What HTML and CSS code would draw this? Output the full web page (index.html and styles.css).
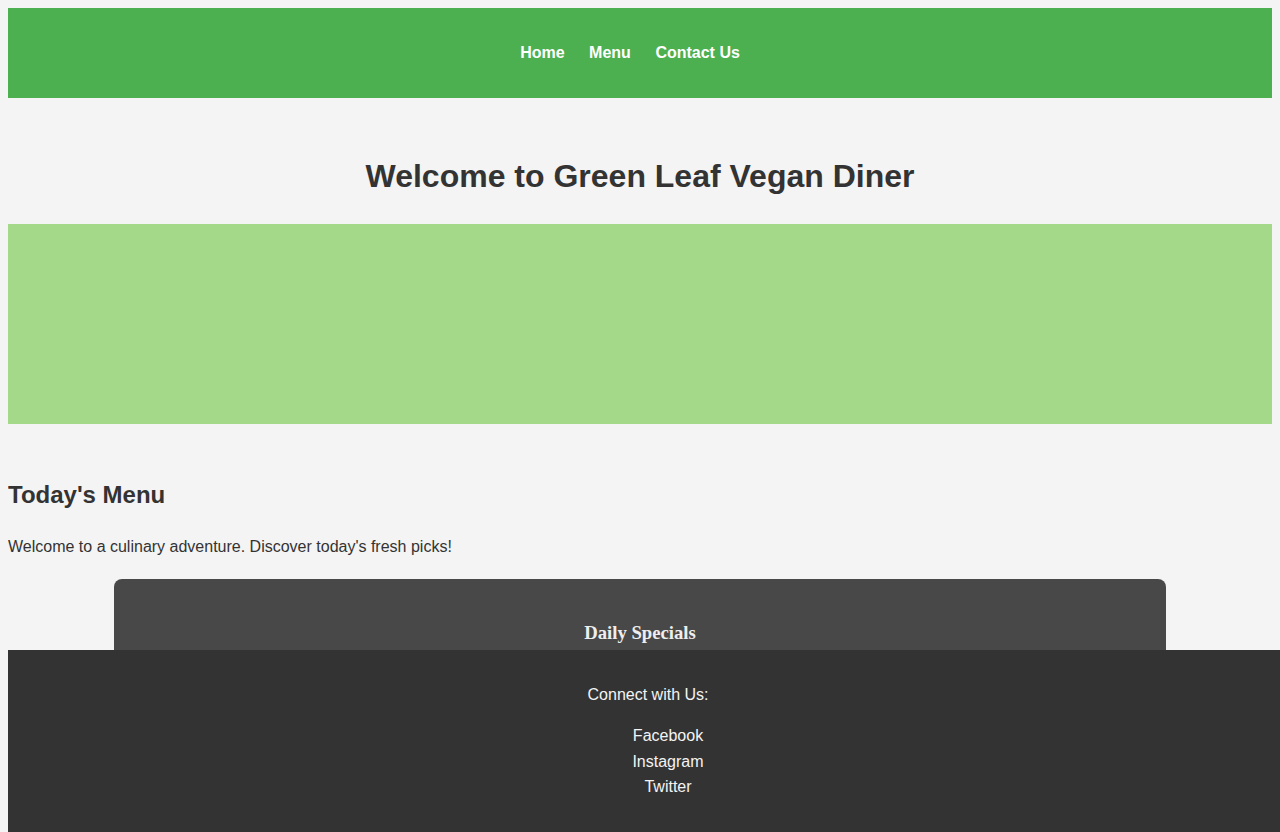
FILE: index.html
```html
<!DOCTYPE html>
<html lang="en">
<head>
<meta charset="utf-8">
<title>Green Leaf Vegan Diner</title>
<link rel="stylesheet" href="styles.css">
</head>
<body>
<header class="site-header">
  <nav class="nav">
    <a href="#" class="nav-link">Home</a>
    <a href="#" class="nav-link">Menu</a>
    <a href="#" class="nav-link">Contact Us</a>
  </nav>
</header>
<main class="main">
  <section class="hero">
    <h1 class="hero-title">Welcome to Green Leaf Vegan Diner</h1>
    <div class="banner"></div>
  </section>
  <section class="menu">
    <h2 class="menu-title">Today's Menu</h2>
    <p class="menu-intro">Welcome to a culinary adventure. Discover today's fresh picks!</p>
    <div class="specials">
      <h3 class="specials-title">Daily Specials</h3>
    </div>
  </section>
</main>
<footer class="site-footer">
  <p class="footer-text">Connect with Us:</p>
  <ul class="social">
    <li>Facebook</li>
    <li>Instagram</li>
    <li>Twitter</li>
  </ul>
</footer>
</body>
</html>
```

FILE: styles.css
```css
html, body {
  margin: 0;
  padding: 0;
}
body {
  margin: 8px;
  background: #f4f4f4;
  color: #333333;
  font-family: "Liberation Sans", Arial, sans-serif;
  font-size: 16px;
  line-height: 1.6;
}
.site-header {
  background: #4caf50;
  height: 90px;
  display: flex;
  align-items: center;
  justify-content: center;
}
.nav {
  display: flex;
  gap: 24.5px;
  padding-right: 20px;
}
.nav-link {
  color: #ffffff;
  font-weight: bold;
  text-decoration: none;
  line-height: 18px;
}
.hero {
  padding-top: 53px;
}
.hero-title {
  margin: 0 0 22px;
  font-size: 32px;
  text-align: center;
  line-height: 51px;
}
.banner {
  height: 200px;
  background: #a3d989;
}
.menu {
  padding-top: 52px;
}
.menu-title {
  margin: 0 0 20px;
  font-size: 24px;
  line-height: 38px;
}
.menu-intro {
  margin: 0 0 19px;
}
.specials {
  width: 80%;
  margin: 0 auto;
  padding: 20px;
  background: #484848;
  border-radius: 8px;
  color: #eeeeee;
  text-align: center;
  min-height: 200px;
}
.specials-title {
  margin: 19px 0 18px;
  font-family: "Liberation Serif", "Times New Roman", serif;
  font-size: 18.72px;
  line-height: 30px;
}
.site-footer {
  position: fixed;
  bottom: 0;
  width: 100%;
  box-sizing: border-box;
  height: 182px;
  padding: 16px 0 15px;
  background: #333333;
  color: #f4f4f4;
  text-align: center;
}
.footer-text {
  margin: 16px 0 15.4px;
}
.social {
  margin: 15.4px 0 16px;
  padding-left: 40px;
  list-style: none;
}
.social li {
  line-height: 25.7px;
}
```
